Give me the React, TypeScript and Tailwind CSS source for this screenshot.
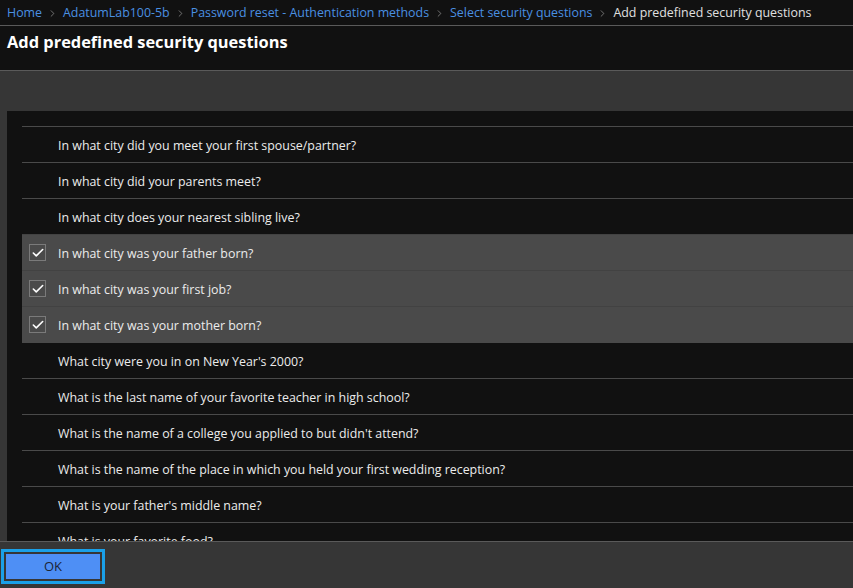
import { Check, ChevronRight } from 'lucide-react';

const questions: { text: string; checked?: boolean }[] = [
  { text: 'In what city did you meet your first spouse/partner?' },
  { text: 'In what city did your parents meet?' },
  { text: 'In what city does your nearest sibling live?' },
  { text: 'In what city was your father born?', checked: true },
  { text: 'In what city was your first job?', checked: true },
  { text: 'In what city was your mother born?', checked: true },
  { text: "What city were you in on New Year's 2000?" },
  { text: 'What is the last name of your favorite teacher in high school?' },
  { text: "What is the name of a college you applied to but didn't attend?" },
  { text: 'What is the name of the place in which you held your first wedding reception?' },
  { text: "What is your father's middle name?" },
  { text: 'What is your favorite food?' },
];

const crumbs = ['Home', 'AdatumLab100-5b', 'Password reset - Authentication methods', 'Select security questions'];

export default function App() {
  return (
    <div
      className="flex h-[588px] w-full flex-col overflow-hidden bg-[#111111] text-[12.4px] text-[#e6e6e6]"
      style={{ fontFamily: '"Open Sans", "Noto Sans", sans-serif' }}
    >
      {/* Breadcrumb */}
      <div className="flex h-[26px] shrink-0 items-center whitespace-nowrap border-b border-[#5a5a5a] px-[7px] pt-[2px]">
        {crumbs.map((c) => (
          <span key={c} className="flex items-center">
            <span className="text-[#4a90e2]">{c}</span>
            <ChevronRight className="mx-[5px] text-[#9a9a9a]" width={11} height={11} strokeWidth={1.5} />
          </span>
        ))}
        <span className="text-[#e0e0e0]">Add predefined security questions</span>
      </div>

      {/* Title */}
      <div className="flex h-[45px] shrink-0 items-start border-b border-[#5a5a5a] px-[7px] pt-[4px]">
        <h1 className="text-[16.4px] font-bold text-white">Add predefined security questions</h1>
      </div>

      {/* Body */}
      <div className="min-h-0 flex-1 bg-[#363636] pl-[7px] pt-[40px]">
        <div className="h-full overflow-hidden bg-[#111111] pl-[15px] pt-[15px]">
          {questions.map((q) => (
            <div
              key={q.text}
              className={
                q.checked
                  ? 'flex h-[36px] items-center border-t border-[#424242] bg-[#4a4a4a]'
                  : 'flex h-[36px] items-center border-t border-[#4a4a4a]'
              }
            >
              <div className="flex w-[36px] shrink-0 pl-[7px]">
                {q.checked && (
                  <span className="grid h-[17px] w-[17px] place-items-center border border-[#7a7a7a]">
                    <Check className="text-white" width={14} height={14} strokeWidth={2.75} />
                  </span>
                )}
              </div>
              <span className="pt-[3px] text-[#ececec]">{q.text}</span>
            </div>
          ))}
        </div>
      </div>

      {/* Footer */}
      <div className="flex h-[47px] shrink-0 items-start border-t border-[#5a5a5a] bg-[#363636] pl-[1px] pt-[7px]">
        <div className="border-[3px] border-[#1aa0e8] p-[2px]">
          <button className="h-[25px] w-[94px] bg-[#4e8ff5] text-[13px] text-[#1b2535]">OK</button>
        </div>
      </div>
    </div>
  );
}
